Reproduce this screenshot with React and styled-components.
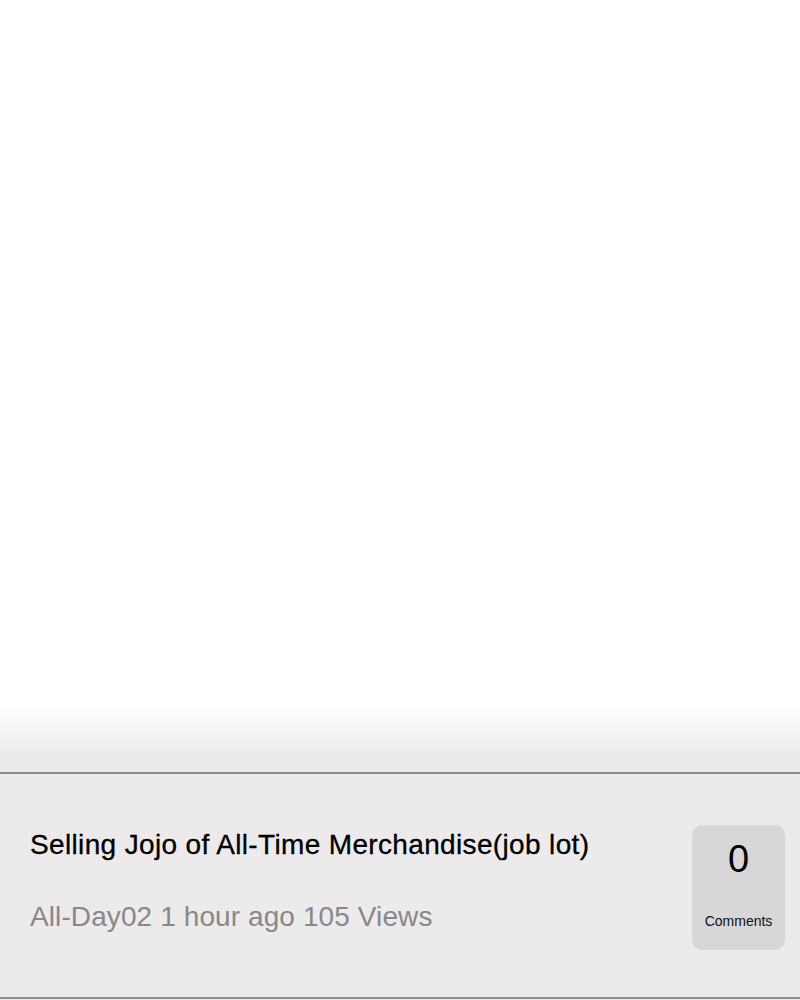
import React from "react";
import styled, { createGlobalStyle } from "styled-components";

const GlobalStyle = createGlobalStyle`
  html, body {
    margin: 0;
    padding: 0;
    background: #eceaeb;
    font-family: "Liberation Sans", Arial, sans-serif;
  }
`;

const Page = styled.div`
  width: 800px;
  height: 1000px;
  display: flex;
  flex-direction: column;
  overflow: hidden;
`;

const Blank = styled.div`
  height: 772px;
  background: linear-gradient(
    to bottom,
    #ffffff 0px,
    #ffffff 705px,
    #f6f5f5 730px,
    #eceaeb 755px,
    #eceaeb 772px
  );
  border-bottom: 2px solid #8f8d8e;
`;

const Row = styled.div`
  height: 223px;
  display: flex;
  align-items: flex-start;
  justify-content: space-between;
  padding: 0 15px 0 30px;
  background: #eceaeb;
  border-bottom: 2px solid #8f8d8e;
`;

const Info = styled.div`
  display: flex;
  flex-direction: column;
  padding-top: 56px;
`;

const Title = styled.div`
  font-size: 28px;
  letter-spacing: 0.35px;
  color: #000;
  line-height: 30px;
  -webkit-text-stroke: 0.3px #000;
`;

const Meta = styled.div`
  margin-top: 42px;
  font-size: 28px;
  letter-spacing: 0.1px;
  color: #888888;
  line-height: 30px;
`;

const CommentBox = styled.div`
  margin-top: 51px;
  width: 93px;
  height: 125px;
  border-radius: 10px;
  background: #d7d7d7;
  display: flex;
  flex-direction: column;
  align-items: center;
`;

const Count = styled.div`
  margin-top: 14px;
  font-size: 38px;
  line-height: 40px;
  color: #000;
`;

const Label = styled.div`
  margin-top: 34px;
  font-size: 14px;
  color: #111;
`;

export default function App() {
  return (
    <>
      <GlobalStyle />
      <Page>
        <Blank />
        <Row>
          <Info>
            <Title>Selling Jojo of All-Time Merchandise(job lot)</Title>
            <Meta>All-Day02 1 hour ago 105 Views</Meta>
          </Info>
          <CommentBox>
            <Count>0</Count>
            <Label>Comments</Label>
          </CommentBox>
        </Row>
      </Page>
    </>
  );
}
